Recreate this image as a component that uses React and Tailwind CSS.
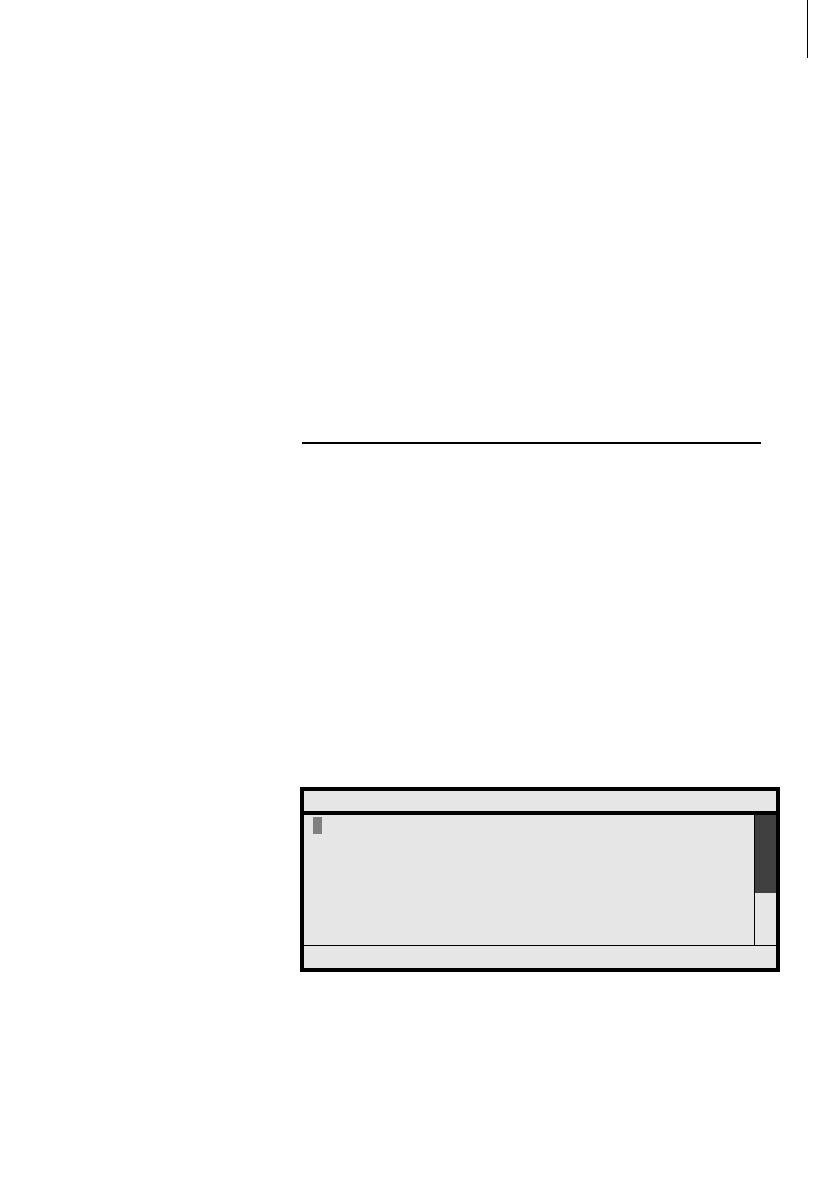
export default function App() {
  return (
    <main className="h-[1190px] w-[840px] overflow-hidden bg-white">
      {/* page edge mark */}
      <div className="flex pl-[807px]">
        <div className="h-[58px] w-px bg-black" />
      </div>

      {/* rule */}
      <div className="ml-[302px] mt-[384px] h-[2px] w-[459px] bg-black" />

      {/* display */}
      <div className="ml-[300px] mt-[343px] flex w-[480px] flex-col border-4 border-black bg-[#e6e6e6]">
        <div className="h-[20px]" />
        <div className="h-[4px] bg-black" />
        <div className="flex h-[130px]">
          <div className="flex-1 pl-[9px] pt-[2px]">
            <div className="h-[17px] w-[9px] bg-[#808080]" />
          </div>
          <div className="w-px bg-black" />
          <div className="flex w-[21px] flex-col">
            <div className="h-[78px] bg-[#404040]" />
          </div>
        </div>
        <div className="h-px bg-black" />
        <div className="h-[22px]" />
      </div>
    </main>
  );
}
